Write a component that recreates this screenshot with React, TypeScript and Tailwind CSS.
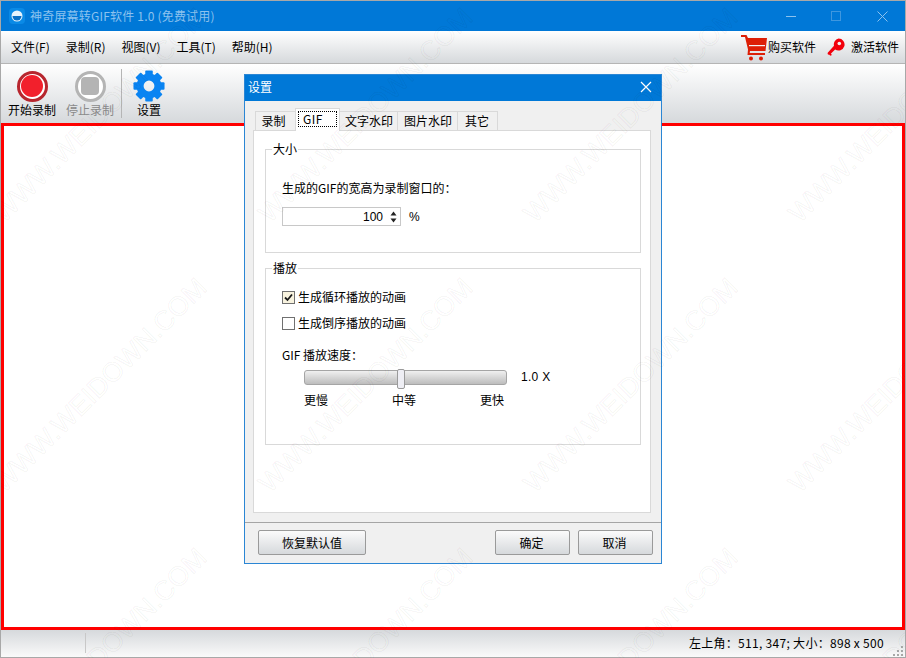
import type { ReactNode } from "react";

const menus = ["文件(F)", "录制(R)", "视图(V)", "工具(T)", "帮助(H)"];
const markXs = [201, 467, 732, 997];
const markYs = [12, 282, 552, 822];

function Watermarks() {
  return (
    <div className="pointer-events-none absolute inset-0 z-20 overflow-hidden">
      {markYs.flatMap((y) =>
        markXs.map((x) => (
          <span
            key={`${x}-${y}`}
            className="absolute w-[310px] whitespace-nowrap text-right font-['Liberation_Sans',sans-serif] text-[27px] leading-[28px] text-transparent [-webkit-text-stroke:1px_rgba(0,0,0,0.05)]"
            style={{ left: x - 310, top: y - 14, transform: "rotate(-45deg)", transformOrigin: "right center" }}
          >
            WWW.WEIDOWN.COM
          </span>
        ))
      )}
    </div>
  );
}

function Gear() {
  const teeth = [0, 45, 90, 135, 180, 225, 270, 315];
  return (
    <svg width="32" height="32" viewBox="0 0 34 34" className="block">
      {teeth.map((a) => (
        <rect key={a} x="13" y="0.5" width="8" height="8" rx="1" fill="#0a84f2" transform={`rotate(${a} 17 17)`} />
      ))}
      <circle cx="17" cy="17" r="9.5" fill="none" stroke="#0a84f2" strokeWidth="7.5" />
    </svg>
  );
}

function Cart() {
  return (
    <svg width="26" height="27" viewBox="0 0 26 27" className="block">
      <path d="M0 1h5.500l1.500 3H26l-1.500 13H9L8.700 19H24v2H6.500L7 15.500 4 3H0z" fill="#dd1f06" />
      <rect x="8" y="11" width="16" height="1.200" fill="#f3f3f3" />
      <circle cx="10" cy="24.500" r="2" fill="#dd1f06" />
      <circle cx="20" cy="24.500" r="2" fill="#dd1f06" />
    </svg>
  );
}

function KeyIcon() {
  return (
    <svg width="18" height="18" viewBox="0 0 18 18" className="block">
      <path d="M11.500 0.500a6 6 0 1 1-3.400 10.900L3.800 15.700 5 17l-1.700.7-1.300-1.200-1 .3L.5 15 7 7.800a6 6 0 0 1 4.500-7.300z" fill="#f2000c" />
      <circle cx="12.300" cy="5.500" r="1.800" fill="#f0f0f0" />
    </svg>
  );
}

function ToolButton({ label, gray, children }: { label: string; gray?: boolean; children: ReactNode }) {
  return (
    <div className="flex flex-col items-center">
      <div className="flex h-[32px] items-center">{children}</div>
      <span className={`mt-px text-[12px] leading-[14px] ${gray ? "text-[#8a8a8a]" : "text-black"}`}>{label}</span>
    </div>
  );
}

function Group({ title, className, children }: { title: string; className: string; children: ReactNode }) {
  return (
    <div className={`relative border border-[#d9d9d9] pl-[16px] ${className}`}>
      <span className="absolute left-[6px] top-[-8px] bg-white px-px text-[12px] leading-[14px]">{title}</span>
      {children}
    </div>
  );
}

function DialogButton({ label, className }: { label: string; className: string }) {
  return (
    <button
      type="button"
      className={`h-[25px] rounded-[2px] border border-[#9a9a9a] bg-gradient-to-b from-[#fbfbfb] to-[#d6d9dc] text-[12px] text-black ${className}`}
    >
      {label}
    </button>
  );
}

function SettingsDialog() {
  return (
    <div className="absolute left-[243px] top-[73px] z-10 flex h-[490px] w-[418px] flex-col border border-[#2b86d4] bg-[#f0f0f0]">
      <div className="flex h-[26px] shrink-0 items-center justify-between bg-[#0078d7] pb-[3px] pl-[3px] pr-[9px] text-[12px] text-white">
        <span>设置</span>
        <svg width="12" height="12" viewBox="0 0 12 12" stroke="white" strokeWidth="1.200">
          <path d="M1 1l10 10M11 1L1 11" />
        </svg>
      </div>

      <div className="flex h-[412px] shrink-0 flex-col pl-2 pr-[10px] pt-[7px]">
        <div className="flex h-[22px] items-end pl-[2px] text-[12px] leading-[14px]">
          <div className="flex h-[19px] w-[40px] items-center justify-center border border-b-0 border-r-0 border-[#d9d9d9] pr-[4px]">录制</div>
          <div className="z-10 -mb-px flex h-[23px] w-[45px] justify-center border border-b-0 border-[#d9d9d9] bg-white px-[2px] pt-[2px]">
            <span className="h-[16px] w-full border border-dotted border-black pl-[4px] leading-[13px] tracking-[0.5px]">GIF</span>
          </div>
          <div className="flex h-[19px] w-[58px] items-center justify-center border border-b-0 border-l-0 border-[#d9d9d9] pl-[1px]">文字水印</div>
          <div className="flex h-[19px] w-[60px] items-center justify-center border border-b-0 border-l-0 border-[#d9d9d9] pl-[1px]">图片水印</div>
          <div className="flex h-[19px] w-[40px] items-center justify-center border border-b-0 border-l-0 border-[#d9d9d9] pr-[1px]">其它</div>
        </div>
        <div className="flex flex-1 flex-col border border-[#d9d9d9] bg-white pl-[11px] pr-[9px] pt-[18px] text-[12px]">
          <Group title="大小" className="h-[104px] pt-[31px]">
            <div className="leading-[14px]">生成的GIF的宽高为录制窗口的：</div>
            <div className="mt-[12px] flex items-center">
              <div className="flex h-[19px] w-[119px] items-center justify-end border border-[#c8c8c8] pr-[3px]">
                <span className="font-['Liberation_Sans',sans-serif]">100</span>
                <svg width="7" height="12" viewBox="0 0 7 12" fill="#222" className="ml-[7px] block">
                  <path d="M3.500 0.500L6.500 4.500H0.500z" />
                  <path d="M0.500 7.500H6.500L3.500 11.500z" />
                </svg>
              </div>
              <span className="ml-2 font-['Liberation_Sans',sans-serif]">%</span>
            </div>
          </Group>

          <Group title="播放" className="mt-[15px] h-[177px] pt-[21px]">
            <div className="flex h-[14px] items-center">
              <span className="flex h-[13px] w-[13px] items-center justify-center border border-[#707070] bg-[#f8f3df]">
                <svg width="9" height="9" viewBox="0 0 9 9" fill="none" stroke="#1a1a1a" strokeWidth="1.800">
                  <path d="M1 4.500l2.500 2.500L8 1.500" />
                </svg>
              </span>
              <span className="ml-[3px]">生成循环播放的动画</span>
            </div>
            <div className="mt-[12px] flex h-[14px] items-center">
              <span className="h-[13px] w-[13px] border border-[#707070] bg-white" />
              <span className="ml-[3px]">生成倒序播放的动画</span>
            </div>
            <div className="mt-[18px] leading-[14px]">GIF 播放速度：</div>
            <div className="mt-[6px] flex items-center pl-[22px]">
              <div className="relative h-[15px] w-[203px] rounded-[3px] border border-[#a5a5a5] bg-gradient-to-b from-[#f0f0f0] to-[#bdbdbd]">
                <div className="absolute left-[92px] top-[-2px] h-[20px] w-[8px] rounded-[2px] border border-[#9a9a9a] bg-[#eeeef4]" />
              </div>
              <span className="ml-[14px] font-['Liberation_Sans',sans-serif] text-[12px] tracking-[0.3px]">1.0 X</span>
            </div>
            <div className="mt-[7px] box-content flex w-[200px] justify-between pl-[22px] leading-[14px]">
              <span>更慢</span>
              <span>中等</span>
              <span>更快</span>
            </div>
          </Group>
        </div>
      </div>

      <div className="mt-[9px] flex flex-1 items-start border-t border-[#a5a5a5] pl-[13px] pr-[8px] pt-[7px]">
        <DialogButton label="恢复默认值" className="w-[108px]" />
        <DialogButton label="确定" className="ml-auto w-[75px] pr-[2px]" />
        <DialogButton label="取消" className="ml-[8px] w-[75px] pr-[2px]" />
      </div>
    </div>
  );
}

export default function App() {
  return (
    <div className="relative flex h-[658px] w-[906px] flex-col overflow-hidden border border-b-0 border-[#a8a8a8] bg-white font-['Noto_Sans_CJK_SC','Liberation_Sans',sans-serif] text-black">
      <div className="flex h-[30px] shrink-0 items-center bg-[#0078d7] pl-[8px] text-[12px] text-[#8cc2ee]">
        <svg width="16" height="16" viewBox="0 0 16 16" className="mr-[5px] block">
          <rect width="16" height="16" rx="4" fill="#0a8ae6" />
          <circle cx="8" cy="8" r="5.500" fill="#e6f3fc" />
          <path d="M3.500 8h9a4.500 4.500 0 0 1-9 0z" fill="#0a6fc4" />
        </svg>
        <span className="tracking-[0.2px]">神奇屏幕转GIF软件 1.0 (免费试用)</span>
        <div className="ml-auto flex items-center pr-[17px]">
          <span className="h-px w-[10px] bg-[#8cc2ee]" />
          <span className="ml-[35px] h-[10px] w-[10px] border border-[#3f97df]" />
          <svg width="11" height="11" viewBox="0 0 11 11" stroke="#8cc2ee" strokeWidth="1" className="ml-[36px]">
            <path d="M0.500 0.500l10 10M10.500 0.500l-10 10" />
          </svg>
        </div>
      </div>

      <div className="flex h-[33px] shrink-0 items-center border-b border-[#b5b5b5] bg-gradient-to-b from-[#ffffff] to-[#d6d9dc] pl-[10px] text-[12px]">
        <div className="flex gap-[16px]">
          {menus.map((m) => (
            <span key={m}>{m}</span>
          ))}
        </div>
        <div className="ml-auto flex items-center pr-[6px]">
          <Cart />
          <span className="ml-px">购买软件</span>
          <span className="ml-[11px]">
            <KeyIcon />
          </span>
          <span className="ml-[6px]">激活软件</span>
        </div>
      </div>

      <div className="flex h-[59px] shrink-0 items-start bg-gradient-to-b from-[#ffffff] to-[#d6d9dc] pl-[7px] pt-[6px]">
        <ToolButton label="开始录制">
          <span className="flex h-[31px] w-[31px] items-center justify-center rounded-full border-[3px] border-[#b7262e] bg-white">
            <span className="h-[22px] w-[22px] rounded-full bg-[#f2202c]" />
          </span>
        </ToolButton>
        <div className="ml-[10px]">
          <ToolButton label="停止录制" gray>
            <span className="flex h-[31px] w-[31px] items-center justify-center rounded-full border-[3px] border-[#b4b4b4] bg-white">
              <span className="h-[18px] w-[18px] rounded-[4px] bg-[#b4b4b4]" />
            </span>
          </ToolButton>
        </div>
        <div className="ml-[7px] mt-[-1px] h-[49px] w-px bg-[#b5b5b5]" />
        <div className="ml-[11px]">
          <ToolButton label="设置">
            <Gear />
          </ToolButton>
        </div>
      </div>

      <div className="h-[507px] shrink-0 border-[3px] border-[#ff0000] bg-white" />

      <div className="flex flex-1 items-center justify-end border-b border-[#a8a8a8] bg-gradient-to-b from-[#d6d9dc] to-[#fafafa] pb-[2px] pr-[21px] text-[12px]">
        <span className="tracking-[0.3px]">左上角：511, 347; 大小：898 x 500</span>
      </div>
      <div className="absolute left-[84px] top-[632px] h-[20px] w-px bg-[#c8c8c8]" />
      <svg width="12" height="12" viewBox="0 0 12 12" fill="#a8a8a8" className="absolute bottom-[1px] right-[1px] block">
        <rect x="9" y="1" width="2" height="2" />
        <rect x="5" y="5" width="2" height="2" />
        <rect x="9" y="5" width="2" height="2" />
        <rect x="1" y="9" width="2" height="2" />
        <rect x="5" y="9" width="2" height="2" />
        <rect x="9" y="9" width="2" height="2" />
      </svg>

      <SettingsDialog />
      <Watermarks />
    </div>
  );
}
